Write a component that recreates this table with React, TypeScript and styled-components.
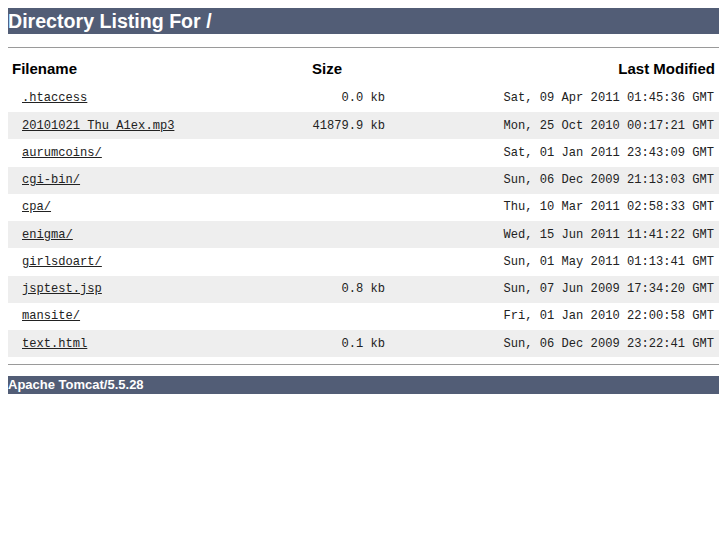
import React from "react";
import styled, { createGlobalStyle } from "styled-components";

const GlobalStyle = createGlobalStyle`
  body {
    margin: 8px;
    background: #fff;
    font-family: "Liberation Sans", Arial, sans-serif;
    color: #000;
  }
`;

const Title = styled.h1`
  margin: 0;
  height: 26px;
  line-height: 26px;
  background-color: #525d76;
  color: white;
  font-size: 19.6px;
  font-weight: bold;
`;

const Rule = styled.hr<{ $top: number; $bottom: number }>`
  margin: ${(p) => p.$top}px 0 ${(p) => p.$bottom}px;
  border: 0;
  height: 1px;
  background: #9a9a9a;
`;

const Listing = styled.div`
  display: grid;
  grid-template-columns: 256px 126px 1fr;
`;

const HeadCell = styled.div<{ $align: "left" | "center" | "right" }>`
  height: 27.75px;
  box-sizing: border-box;
  padding: 0 4px 4px 4px;
  display: flex;
  align-items: center;
  justify-content: ${(p) =>
    p.$align === "left" ? "flex-start" : p.$align === "right" ? "flex-end" : "center"};
  font-size: 15px;
  font-weight: bold;
`;

const Row = styled.div<{ $shaded: boolean }>`
  display: contents;
  & > div {
    background: ${(p) => (p.$shaded ? "#eeeeee" : "transparent")};
  }
`;

const Cell = styled.div<{ $indent?: boolean }>`
  height: 27.25px;
  padding: 0 5px 0 ${(p) => (p.$indent ? "14px" : "5px")};
  display: flex;
  align-items: center;
  justify-content: ${(p) => (p.$indent ? "flex-start" : "flex-end")};
  font-family: "Liberation Mono", "Courier New", monospace;
  font-size: 12.1px;
  color: #222;
  white-space: pre;
`;

const FileLink = styled.a`
  color: #222;
  text-decoration: underline;
`;

const Footer = styled.h3`
  margin: 0;
  height: 18px;
  line-height: 18px;
  background-color: #525d76;
  color: white;
  font-size: 13px;
  font-weight: bold;
`;

const files = [
  { name: ".htaccess", size: "0.0 kb", modified: "Sat, 09 Apr 2011 01:45:36 GMT" },
  { name: "20101021 Thu A1ex.mp3", size: "41879.9 kb", modified: "Mon, 25 Oct 2010 00:17:21 GMT" },
  { name: "aurumcoins/", size: "", modified: "Sat, 01 Jan 2011 23:43:09 GMT" },
  { name: "cgi-bin/", size: "", modified: "Sun, 06 Dec 2009 21:13:03 GMT" },
  { name: "cpa/", size: "", modified: "Thu, 10 Mar 2011 02:58:33 GMT" },
  { name: "enigma/", size: "", modified: "Wed, 15 Jun 2011 11:41:22 GMT" },
  { name: "girlsdoart/", size: "", modified: "Sun, 01 May 2011 01:13:41 GMT" },
  { name: "jsptest.jsp", size: "0.8 kb", modified: "Sun, 07 Jun 2009 17:34:20 GMT" },
  { name: "mansite/", size: "", modified: "Fri, 01 Jan 2010 22:00:58 GMT" },
  { name: "text.html", size: "0.1 kb", modified: "Sun, 06 Dec 2009 23:22:41 GMT" },
];

export default function App() {
  return (
    <>
      <GlobalStyle />
      <Title>Directory Listing For /</Title>
      <Rule $top={13} $bottom={9} />
      <Listing>
        <HeadCell $align="left">Filename</HeadCell>
        <HeadCell $align="center">Size</HeadCell>
        <HeadCell $align="right">Last Modified</HeadCell>
        {files.map((f, i) => (
          <Row key={f.name} $shaded={i % 2 === 1}>
            <Cell $indent>
              <FileLink href="#">{f.name}</FileLink>
            </Cell>
            <Cell>{f.size}</Cell>
            <Cell>{f.modified}</Cell>
          </Row>
        ))}
      </Listing>
      <Rule $top={7} $bottom={11} />
      <Footer>Apache Tomcat/5.5.28</Footer>
    </>
  );
}
